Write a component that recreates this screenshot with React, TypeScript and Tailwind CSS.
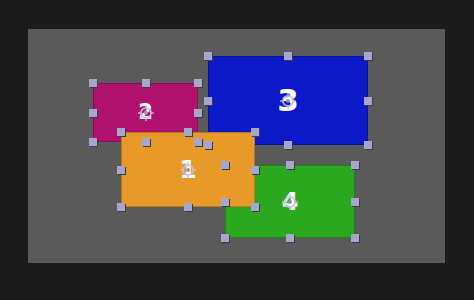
import React from "react"

type Box = {
  id: number
  left: number
  top: number
  w: number
  h: number
  bg: string
  text: string
}

// listed bottom to top, as stacked on the canvas
const boxes: Box[] = [
  { id: 2, left: 65, top: 54, w: 105, h: 59, bg: "bg-[#b0106e] border-[#8a0c56]", text: "text-[21px]" },
  { id: 3, left: 180, top: 27, w: 160, h: 89, bg: "bg-[#0b19c9] border-[#07129a]", text: "text-[31px]" },
  { id: 4, left: 197, top: 136, w: 130, h: 73, bg: "bg-[#2aa81f] border-[#1f8417]", text: "text-[24px]" },
  { id: 1, left: 93, top: 103, w: 134, h: 75, bg: "bg-[#e89a28] border-[#b9781c]", text: "text-[25px]" },
]

const Marker = () => (
  <svg width="16" height="16" viewBox="0 0 16 16" className="absolute left-1/2 top-1/2 -translate-x-1/2 -translate-y-1/2 opacity-90">
    <circle cx="8" cy="8" r="5" fill="none" stroke="#c2c2dc" strokeWidth="2" />
    <circle cx="8" cy="8" r="2" fill="#8c8cb4" />
    <line x1="8" y1="0" x2="8" y2="4" stroke="#c2c2dc" strokeWidth="1.5" />
    <line x1="8" y1="12" x2="8" y2="16" stroke="#c2c2dc" strokeWidth="1.5" />
    <line x1="0" y1="8" x2="4" y2="8" stroke="#c2c2dc" strokeWidth="1.5" />
    <line x1="12" y1="8" x2="16" y2="8" stroke="#c2c2dc" strokeWidth="1.5" />
  </svg>
)

const Handle = ({ x, y }: { x: number; y: number }) => (
  <div
    className="absolute w-[8px] h-[8px] bg-[#a6a6cc] shadow-[1px_1px_0_#3c3c48]"
    style={{ left: x - 4, top: y - 4 }}
  />
)

export default function App() {
  const handles = boxes.flatMap((b) => {
    const xs = [b.left, b.left + b.w / 2, b.left + b.w]
    const ys = [b.top, b.top + b.h / 2, b.top + b.h]
    const pts: { x: number; y: number }[] = []
    ys.forEach((y, yi) =>
      xs.forEach((x, xi) => {
        if (xi === 1 && yi === 1) return
        pts.push({ x: Math.round(x), y: Math.round(y) })
      })
    )
    return pts.map((p, i) => ({ ...p, key: `${b.id}-${i}` }))
  })

  return (
    <div className="w-[474px] h-[300px] bg-[#1b1b1b] pt-[29px] pl-[28px] overflow-hidden">
      <div className="relative w-[417px] h-[234px] bg-[#5a5a5a]">
        {boxes.map((b) => (
          <div
            key={b.id}
            className={`absolute border ${b.bg}`}
            style={{ left: b.left, top: b.top, width: b.w, height: b.h }}
          >
            <div className="absolute inset-0 flex items-center justify-center">
              <span
                className={`relative font-black text-white leading-none ${b.text}`}
                style={{ fontFamily: '"DejaVu Sans", sans-serif' }}
              >
                {b.id}
              </span>
            </div>
            <Marker />
          </div>
        ))}
        {handles.map((h) => (
          <Handle key={h.key} x={h.x} y={h.y} />
        ))}
      </div>
    </div>
  )
}
